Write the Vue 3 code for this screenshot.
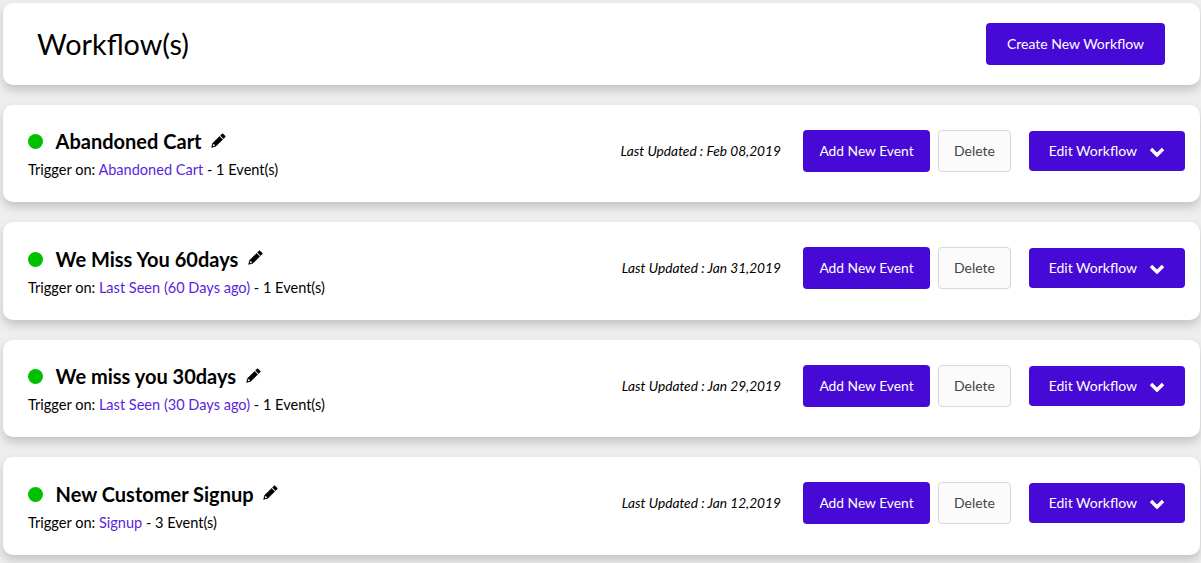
<template>
  <div class="page">
    <div class="card header">
      <h1 class="page-title">Workflow(s)</h1>
      <button class="btn primary create">Create New Workflow</button>
    </div>

    <div v-for="wf in workflows" :key="wf.name" class="card row">
      <div class="info">
        <div class="title-line">
          <span class="dot"></span>
          <span class="name">{{ wf.name }}</span>
          <svg class="pencil" viewBox="0 0 16 16" width="15" height="15">
            <path fill="#000" stroke="#000" stroke-width="0.3" d="M11.6 1a1 1 0 0 1 1.4 0l2 2a1 1 0 0 1 0 1.4l-1.6 1.6-3.4-3.4zM9.2 3.4l3.4 3.4-7.6 7.6-4.5 1.1 1.1-4.5z"/>
            <path fill="#fff" d="M2.6 11.7l-.6 2.3 2.3-.6-.2-.8H3.4v-.9z"/>
          </svg>
        </div>
        <div class="trigger">Trigger on: <a class="link">{{ wf.trigger }}</a> - {{ wf.events }} Event(s)</div>
      </div>
      <div class="updated">Last Updated : {{ wf.updated }}</div>
      <button class="btn primary add">Add New Event</button>
      <button class="btn delete">Delete</button>
      <button class="btn primary edit">
        Edit Workflow
        <svg class="chev" viewBox="0 0 16 10" width="16" height="10">
          <path d="M2 2l6 6 6-6" fill="none" stroke="#fff" stroke-width="3.4"/>
        </svg>
      </button>
    </div>
  </div>
</template>

<script setup>
const workflows = [
  { name: 'Abandoned Cart', trigger: 'Abandoned Cart', events: 1, updated: 'Feb 08,2019' },
  { name: 'We Miss You 60days', trigger: 'Last Seen (60 Days ago)', events: 1, updated: 'Jan 31,2019' },
  { name: 'We miss you 30days', trigger: 'Last Seen (30 Days ago)', events: 1, updated: 'Jan 29,2019' },
  { name: 'New Customer Signup', trigger: 'Signup', events: 3, updated: 'Jan 12,2019' }
]
</script>

<style scoped>
.page {
  padding: 3px 1px 0 3px;
  font-family: Lato, sans-serif;
  color: #000;
}

.card {
  display: flex;
  align-items: center;
  background: #fff;
  border-radius: 10px;
  box-shadow: 0 5px 10px rgba(0, 0, 0, 0.18);
}

.header {
  height: 82px;
  padding: 0 35px;
  margin-bottom: 20px;
  justify-content: space-between;
}

.page-title {
  margin: 0 0 0 -1px;
  font-size: 28.8px;
  font-weight: 400;
}

.row {
  height: 97.4px;
  padding: 0 15px 5.4px 25px;
  margin-bottom: 20px;
  box-sizing: border-box;
}

.info {
  flex: 1;
  align-self: flex-start;
  padding-top: 22.4px;
}

.title-line {
  display: flex;
  align-items: center;
  height: 28px;
}

.dot {
  width: 15px;
  height: 15px;
  border-radius: 50%;
  background: #00c000;
  margin-right: 12.6px;
  margin-top: 1px;
}

.name {
  font-size: 20px;
  font-weight: 700;
}

.pencil {
  margin-left: 9.5px;
  margin-bottom: 2px;
}

.trigger {
  font-size: 14.55px;
  margin-top: 6px;
}

.link {
  color: #5b1fdc;
}

.updated {
  font-size: 13.72px;
  font-style: italic;
  margin-right: 22px;
  padding-bottom: 1px;
}

.btn {
  font-family: inherit;
  font-size: 14px;
  height: 42px;
  border-radius: 4px;
  border: 1px solid transparent;
  padding: 0 0 1px;
}

.primary {
  background: #4709d6;
  color: #fff;
}

.create {
  width: 179px;
  padding-bottom: 2px;
}

.add {
  width: 127px;
  margin-right: 8px;
  font-size: 13.8px;
}

.delete {
  width: 73px;
  margin-right: 18px;
  background: #fbfbfb;
  border-color: #d8d8d8;
  color: #444;
}

.edit {
  width: 156px;
  height: 40px;
}

.chev {
  margin-left: 9px;
  vertical-align: -1px;
}
</style>

<style>
body {
  background: #eee;
}
</style>
